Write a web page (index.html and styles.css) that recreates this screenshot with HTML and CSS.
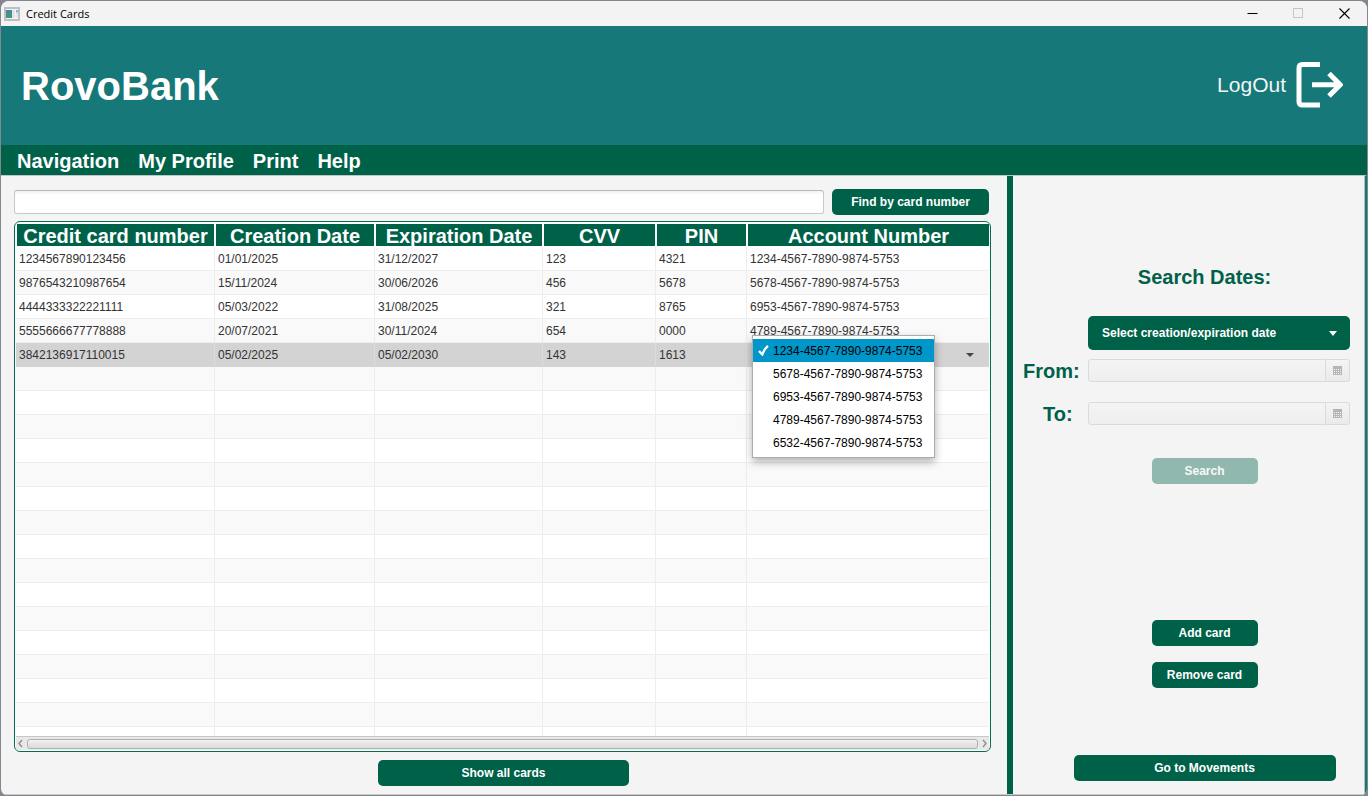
FILE: index.html
```html
<!DOCTYPE html>
<html lang="en">
<head>
<meta charset="utf-8">
<title>Credit Cards</title>
<link rel="stylesheet" href="styles.css">
</head>
<body>
<div class="window">
  <div class="titlebar">
    <svg class="app-icon" width="16" height="14" viewBox="0 0 16 14" aria-hidden="true">
      <rect x="1" y="1" width="14" height="12" fill="#f4f4f4" stroke="#bcc0c2" stroke-width="2"/>
      <path d="M2 3h6v4H2z" fill="#4a86a5"/>
      <path d="M2 6h6v5H2z" fill="#45997a"/>
      <rect x="8" y="3" width="3" height="8" fill="#dfe5e6"/>
      <path d="M12 3h2v2l-2 1z" fill="#7fb7d8"/>
      <rect x="12" y="6" width="2" height="5" fill="#e4eae8"/>
    </svg>
    <span class="window-title">Credit Cards</span>
    <div class="window-controls">
      <button type="button" class="control" aria-label="Minimize"><svg width="11" height="11" viewBox="0 0 11 11"><path d="M0.500 5.500h10" stroke="#000"/></svg></button>
      <button type="button" class="control" aria-label="Maximize" disabled><svg width="11" height="11" viewBox="0 0 11 11"><rect x="0.500" y="0.500" width="9" height="9" fill="none" stroke="#c6c6c6"/></svg></button>
      <button type="button" class="control" aria-label="Close"><svg width="11" height="11" viewBox="0 0 11 11"><path d="M0.500 0.500l10 10M10.500 0.500l-10 10" stroke="#000" stroke-width="1.100"/></svg></button>
    </div>
  </div>

  <header class="banner">
    <h1>RovoBank</h1>
    <a class="logout" href="#">LogOut
      <svg width="48" height="48" viewBox="0 0 48 48" aria-hidden="true">
        <path d="M25 3.500H7.500Q4 3.500 4 7V40.500Q4 44 7.500 44H25" fill="none" stroke="#fff" stroke-width="5"/>
        <path d="M17 23.700H46M34 12.500L45.200 23.700L34 34.900" fill="none" stroke="#fff" stroke-width="5"/>
      </svg>
    </a>
  </header>

  <nav class="menubar">
    <button type="button">Navigation</button>
    <button type="button">My Profile</button>
    <button type="button">Print</button>
    <button type="button">Help</button>
  </nav>

  <div class="content">
    <main class="cards">
      <form class="find">
        <input type="text" class="find-input" aria-label="Card number">
        <button type="button" class="btn find-btn">Find by card number</button>
      </form>

      <div class="table-frame">
        <div class="table-view">
          <table>
            <colgroup><col class="c-number"><col class="c-created"><col class="c-expires"><col class="c-cvv"><col class="c-pin"><col></colgroup>
            <thead>
              <tr><th>Credit card number</th><th>Creation Date</th><th>Expiration Date</th><th>CVV</th><th>PIN</th><th>Account Number</th></tr>
            </thead>
            <tbody>
              <tr><td>1234567890123456</td><td>01/01/2025</td><td>31/12/2027</td><td>123</td><td>4321</td><td>1234-4567-7890-9874-5753</td></tr>
              <tr><td>9876543210987654</td><td>15/11/2024</td><td>30/06/2026</td><td>456</td><td>5678</td><td>5678-4567-7890-9874-5753</td></tr>
              <tr><td>4444333322221111</td><td>05/03/2022</td><td>31/08/2025</td><td>321</td><td>8765</td><td>6953-4567-7890-9874-5753</td></tr>
              <tr><td>5555666677778888</td><td>20/07/2021</td><td>30/11/2024</td><td>654</td><td>0000</td><td>4789-4567-7890-9874-5753</td></tr>
              <tr class="selected"><td>3842136917110015</td><td>05/02/2025</td><td>05/02/2030</td><td>143</td><td>1613</td>
                <td class="editing">
                  <select class="account-select" aria-label="Account Number"><option></option></select>
                  <ul class="popup" role="listbox" aria-label="Account Number">
                    <li class="active" role="option" aria-selected="true"><svg width="11" height="11" viewBox="0 0 11 11" aria-hidden="true"><path d="M1 6L4.300 9.500Q6 4 10 0.800" fill="none" stroke="#fff" stroke-width="2.300"/></svg>1234-4567-7890-9874-5753</li>
                    <li role="option">5678-4567-7890-9874-5753</li>
                    <li role="option">6953-4567-7890-9874-5753</li>
                    <li role="option">4789-4567-7890-9874-5753</li>
                    <li role="option">6532-4567-7890-9874-5753</li>
                  </ul>
                </td></tr>
              <tr><td></td><td></td><td></td><td></td><td></td><td></td></tr>
              <tr><td></td><td></td><td></td><td></td><td></td><td></td></tr>
              <tr><td></td><td></td><td></td><td></td><td></td><td></td></tr>
              <tr><td></td><td></td><td></td><td></td><td></td><td></td></tr>
              <tr><td></td><td></td><td></td><td></td><td></td><td></td></tr>
              <tr><td></td><td></td><td></td><td></td><td></td><td></td></tr>
              <tr><td></td><td></td><td></td><td></td><td></td><td></td></tr>
              <tr><td></td><td></td><td></td><td></td><td></td><td></td></tr>
              <tr><td></td><td></td><td></td><td></td><td></td><td></td></tr>
              <tr><td></td><td></td><td></td><td></td><td></td><td></td></tr>
              <tr><td></td><td></td><td></td><td></td><td></td><td></td></tr>
              <tr><td></td><td></td><td></td><td></td><td></td><td></td></tr>
              <tr><td></td><td></td><td></td><td></td><td></td><td></td></tr>
              <tr><td></td><td></td><td></td><td></td><td></td><td></td></tr>
              <tr><td></td><td></td><td></td><td></td><td></td><td></td></tr>
              <tr><td></td><td></td><td></td><td></td><td></td><td></td></tr>
            </tbody>
          </table>
        </div>
        <div class="scrollbar">
          <svg width="5" height="9" viewBox="0 0 5 9" aria-hidden="true"><path d="M4 1L1 4.500L4 8" fill="none" stroke="#8a8a8a" stroke-width="1.300"/></svg>
          <div class="thumb"></div>
          <svg width="5" height="9" viewBox="0 0 5 9" aria-hidden="true"><path d="M1 1L4 4.500L1 8" fill="none" stroke="#8a8a8a" stroke-width="1.300"/></svg>
        </div>
      </div>

      <button type="button" class="btn show-all">Show all cards</button>
    </main>

    <aside class="sidebar">
      <h2>Search Dates:</h2>
      <div class="search-form">
        <select class="date-kind" aria-label="Date type"><option>Select creation/expiration date</option></select>
        <label for="from">From:</label>
        <div class="date-field">
          <input id="from" type="text" disabled>
          <button type="button" aria-label="Pick start date" disabled><svg width="9" height="9" viewBox="0 0 9 9"><path d="M0 0h9v9H0z" fill="#b5b5b5"/><path d="M1 3.500h7M1 5.500h7M1 7.500h7" stroke="#f4f4f4" stroke-dasharray="1 1"/></svg></button>
        </div>
        <label for="to">To:</label>
        <div class="date-field">
          <input id="to" type="text" disabled>
          <button type="button" aria-label="Pick end date" disabled><svg width="9" height="9" viewBox="0 0 9 9"><path d="M0 0h9v9H0z" fill="#b5b5b5"/><path d="M1 3.500h7M1 5.500h7M1 7.500h7" stroke="#f4f4f4" stroke-dasharray="1 1"/></svg></button>
        </div>
      </div>
      <div class="actions">
        <button type="button" class="btn small" disabled>Search</button>
        <button type="button" class="btn small add">Add card</button>
        <button type="button" class="btn small">Remove card</button>
        <button type="button" class="btn movements">Go to Movements</button>
      </div>
    </aside>
  </div>
</div>
</body>
</html>
```
FILE: styles.css
```css
* { box-sizing: border-box; }

:root {
  --green: #006149;
  --teal: #167878;
  --panel: #f4f4f4;
}

body {
  margin: 0;
  padding: 1px;
  height: 100vh;
  background: #85868f;
  font: 12px/16px "Liberation Sans", Arial, sans-serif;
  color: #333;
}

button, input, select { font: inherit; }

.window {
  display: flex;
  flex-direction: column;
  height: 100%;
  min-height: 640px;
  overflow: hidden;
  background: var(--panel);
  border-radius: 8px 8px 6px 6px;
}

.titlebar {
  display: flex;
  align-items: center;
  flex: none;
  height: 25px;
  padding-left: 3px;
  background: #f3f3f3;
}
.window-title {
  margin-left: 6px;
  font-family: "Open Sans", sans-serif;
  font-size: 11px;
  color: #000;
}
.window-controls { display: flex; margin-left: auto; }
.control {
  display: grid;
  place-items: center;
  width: 46px;
  height: 25px;
  padding: 0;
  border: 0;
  background: none;
}

.banner {
  display: flex;
  align-items: center;
  justify-content: space-between;
  flex: none;
  height: 119px;
  padding: 0 24px 0 20px;
  background: var(--teal);
  color: #fff;
}
.banner h1 { margin: 0; font-size: 40px; line-height: 48px; }
.logout {
  display: flex;
  align-items: center;
  gap: 9px;
  padding-bottom: 2px;
  font-size: 21px;
  line-height: 24px;
  color: #f0f6f6;
  text-decoration: none;
}

.menubar {
  display: flex;
  gap: 19px;
  flex: none;
  height: 30px;
  padding: 2px 0 0 16px;
  background: var(--green);
}
.menubar button {
  padding: 0;
  border: 0;
  background: none;
  color: #fff;
  font-size: 20px;
  font-weight: bold;
  line-height: 24px;
}

.content {
  display: flex;
  flex: 1;
  min-height: 0;
  border-top: 1px solid #c4c4c4;
  border-right: 2px solid #0f7a70;
  border-bottom: 1px solid #c8c8c8;
}

.cards {
  display: flex;
  flex-direction: column;
  flex: 1;
  min-width: 0;
  padding: 13px 16px 8px 13px;
}

.btn {
  height: 26px;
  padding: 0;
  border: 0;
  border-radius: 5px;
  background: var(--green);
  color: #fff;
  font-weight: bold;
}
.btn:disabled { opacity: 0.4; }

.find { display: flex; align-items: center; gap: 8px; padding-right: 2px; }
.find-input {
  flex: 1;
  min-width: 0;
  height: 24px;
  border: 1px solid #c8c8c8;
  border-top-color: #b8b8b8;
  border-radius: 3px;
  background: linear-gradient(#f2f2f2, #fff 4px);
}
.find-btn { width: 157px; }

.table-frame {
  display: flex;
  flex-direction: column;
  flex: 1;
  min-height: 0;
  margin-top: 6px;
  padding: 1px;
  overflow: hidden;
  border: 1px solid #006d52;
  border-radius: 6px;
  background: #fff;
}
.table-view { flex: 1; min-height: 0; overflow: hidden; }

table { width: 100%; table-layout: fixed; border-collapse: separate; border-spacing: 0; }
.c-number { width: 199px; }
.c-created { width: 160px; }
.c-expires { width: 168px; }
.c-cvv { width: 113px; }
.c-pin { width: 91px; }

th {
  height: 24px;
  padding: 2px 0 0;
  border: 1px solid #fff;
  background: var(--green);
  color: #fff;
  font-size: 20px;
  line-height: 20px;
  white-space: nowrap;
}
th:last-child { border-right: 0; }
td {
  height: 24px;
  padding: 0 3px;
  border-right: 1px solid #ededed;
  border-bottom: 1px solid #ededed;
  white-space: nowrap;
}
td:last-child { border-right: 0; }
tbody tr:nth-child(even) { background: #f9f9f9; }
tbody tr.selected { background: #d3d3d3; }
.selected td { border-color: #dcdcdc; border-bottom-color: #d3d3d3; }

td.editing { position: relative; padding: 0; }
.account-select {
  display: block;
  width: 100%;
  height: 23px;
  border: 0;
  appearance: none;
  background: url("data:image/svg+xml,%3Csvg xmlns='http://www.w3.org/2000/svg' width='8' height='4'%3E%3Cpath d='M0 0h8L4 4z' fill='%23444'/%3E%3C/svg%3E") no-repeat right 15px center;
}
.popup {
  position: absolute;
  top: -8px;
  left: 5px;
  z-index: 1;
  width: 183px;
  margin: 0;
  padding: 3px 0;
  list-style: none;
  border: 1px solid #adadad;
  background: #fff;
  box-shadow: 0 4px 8px rgba(0, 0, 0, 0.3);
  color: #000;
}
.popup li { display: flex; align-items: center; height: 23px; padding-left: 20px; }
.popup .active { gap: 4px; padding-left: 5px; background: #0096c9; }

.scrollbar {
  display: flex;
  align-items: center;
  gap: 4px;
  flex: none;
  height: 14px;
  padding: 0 2px;
  border-top: 1px solid #c8c8c8;
  background: #e8e8e8;
}
.thumb {
  flex: 1;
  height: 10px;
  border: 1px solid #b0b0b0;
  border-radius: 3px;
  background: linear-gradient(#f2f2f2, #dadada);
}

.show-all { align-self: center; width: 251px; margin: 8px 0 0 2px; }

.sidebar {
  display: flex;
  flex-direction: column;
  flex: none;
  width: 358px;
  border-left: 6px solid var(--green);
  border-right: 1px solid #bdbdbd;
}
.sidebar h2 {
  margin: 89px 0 0 32px;
  color: var(--green);
  font-size: 20px;
  line-height: 24px;
  text-align: center;
}

.search-form {
  display: grid;
  grid-template-columns: 65px 1fr;
  grid-template-rows: 43px 43px 23px;
  margin-top: 27px;
  padding: 0 14px 0 10px;
}
.search-form label {
  color: var(--green);
  font-size: 20px;
  font-weight: bold;
  line-height: 24px;
}
.search-form label[for="to"] { padding-left: 20px; }
.date-kind {
  grid-column: 2;
  width: 100%;
  height: 34px;
  padding: 0 14px;
  border: 0;
  border-radius: 5px;
  appearance: none;
  background: var(--green) url("data:image/svg+xml,%3Csvg xmlns='http://www.w3.org/2000/svg' width='8' height='5'%3E%3Cpath d='M0 0h8L4 5z' fill='%23fff'/%3E%3C/svg%3E") no-repeat right 13px center;
  color: #fff;
  font-weight: bold;
}
.date-field { display: flex; height: 23px; }
.date-field input {
  flex: 1;
  min-width: 0;
  border: 1px solid #dbdbdb;
  border-radius: 3px 0 0 3px;
  background: linear-gradient(#f4f4f4, #eee);
}
.date-field button {
  display: grid;
  place-items: center;
  width: 24px;
  padding: 0;
  border: 1px solid #dbdbdb;
  border-left: 0;
  border-radius: 0 3px 3px 0;
  background: linear-gradient(#f4f4f4, #eaeaea);
}

.actions {
  display: flex;
  flex-direction: column;
  align-items: center;
  gap: 16px;
  flex: 1;
  margin-top: 33px;
  padding: 0 0 13px 32px;
}
.small { width: 106px; }
.add { margin-top: 120px; }
.movements { width: 262px; margin-top: auto; }
```
